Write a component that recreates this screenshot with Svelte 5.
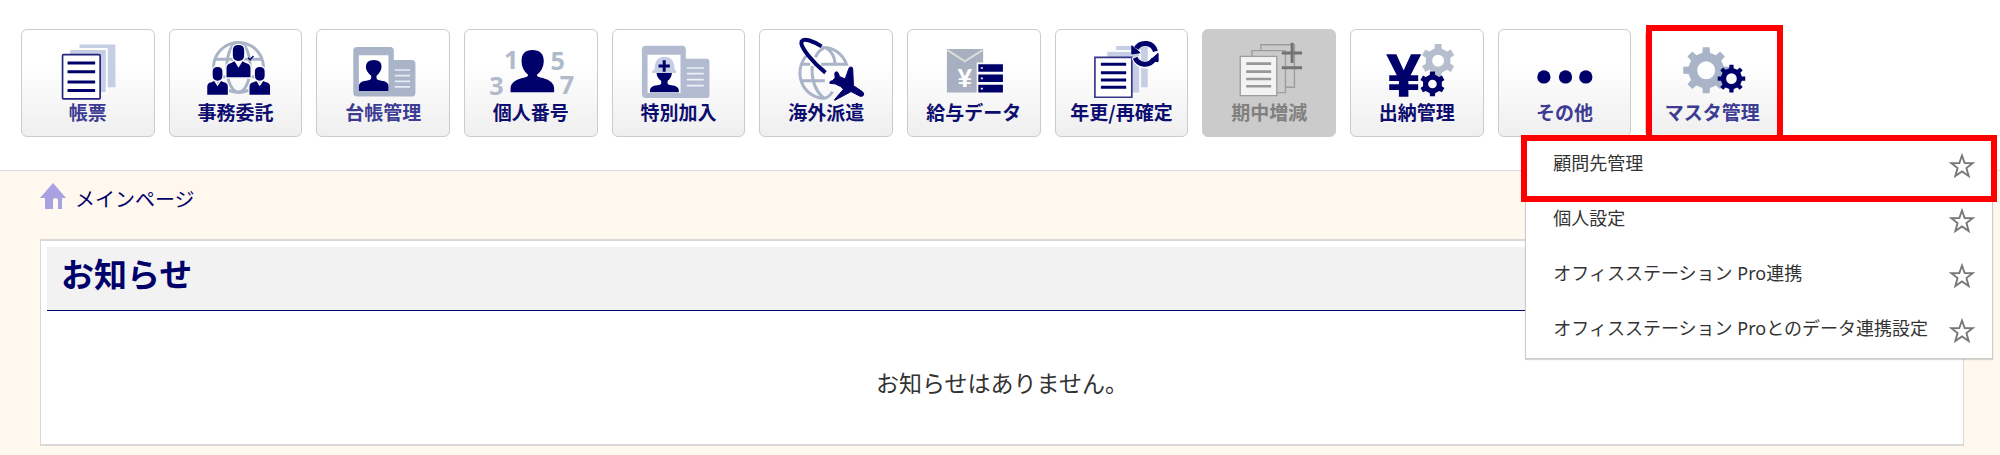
<script lang="ts">
  type Tool = {
    id: string;
    label: string;
    x: number; // left edge of the icon's viewBox
    soft?: boolean;
    disabled?: boolean;
    current?: boolean;
  };

  const tools: Tool[] = [
    { id: "forms", label: "帳票", x: 66, soft: true },
    { id: "entrust", label: "事務委託", x: 508 },
    { id: "ledger", label: "台帳管理", x: 52, soft: true },
    { id: "number", label: "個人番号", x: 494 },
    { id: "special", label: "特別加入", x: 39 },
    { id: "overseas", label: "海外派遣", x: 481 },
    { id: "salary", label: "給与データ", x: 55 },
    { id: "renewal", label: "年更/再確定", x: 497 },
    { id: "midterm", label: "期中増減", x: 41, disabled: true },
    { id: "cash", label: "出納管理", x: 483 },
    { id: "other", label: "その他", x: 57, soft: true },
    { id: "master", label: "マスタ管理", x: 499, soft: true, current: true },
  ];

  const menu = [
    "顧問先管理",
    "個人設定",
    "オフィスステーション Pro連携",
    "オフィスステーション Proとのデータ連携設定",
  ];

  const navy = "#00006b";
  const pale = "#a9b4c8";
  const sheet = "#c5cee3";

  let starred = $state<Record<string, boolean>>({});

  // Toothed ring with a round hole, filled with the evenodd rule.
  function gear(cx: number, cy: number, outer: number, inner: number, hole: number, teeth: number) {
    const step = (Math.PI * 2) / teeth;
    const pts: string[] = [];
    for (let i = 0; i < teeth; i++) {
      const a = i * step - Math.PI / 2;
      for (const [r, d] of [[inner, -0.27], [outer, -0.19], [outer, 0.19], [inner, 0.27]]) {
        const t = a + d * step;
        pts.push(`${(cx + r * Math.cos(t)).toFixed(1)} ${(cy + r * Math.sin(t)).toFixed(1)}`);
      }
    }
    return `M${pts.join("L")}Z M${cx - hole} ${cy}a${hole} ${hole} 0 1 0 ${hole * 2} 0a${hole} ${hole} 0 1 0 ${-hole * 2} 0Z`;
  }
</script>

{#snippet person(x: number, y: number, s: number)}
  <g transform="translate({x} {y}) scale({s})">
    <path
      d="M-36 49v-28q0-12 14-15l10-5 12 19 12-19 10 5q14 3 14 15v28z M-17-32q0-16 17-16t17 16v14q0 18-17 18t-17-18z"
      fill={navy}
      stroke="#fafafa"
      stroke-width="8"
      paint-order="stroke"
    />
  </g>
{/snippet}

{#snippet icon(id: string)}
  {#if id === "forms"}
    <path d="M239 103h108v129h-108z" fill={sheet} />
    <path d="M208 117h113v133h-113z" fill={sheet} stroke="#fff" stroke-width="6" />
    <rect x="188" y="134" width="113" height="133" rx="3" fill="#fff" stroke="#23237f" stroke-width="5" />
    <path d="M203 159h83M203 185h83M203 216h83M203 242h83" stroke={navy} stroke-width="9" />
  {:else if id === "entrust"}
    <g fill="none" stroke={pale} stroke-width="9">
      <circle cx="714" cy="172" r="75" />
      <ellipse cx="714" cy="172" rx="35" ry="75" />
      <path d="M644 148h140M644 200h140" />
    </g>
    <path d="M743 143l6 6 10-11" fill="none" stroke={navy} stroke-width="4" />
    {@render person(651, 212, 0.86)}
    {@render person(778, 212, 0.86)}
    {@render person(714, 153, 1)}
  {:else if id === "ledger"}
    <path
      d="M172 111h100q11 0 11 11v28h54q11 0 11 11v87q0 12-11 12H172q-11 0-11-12V122q0-11 11-11z"
      fill={pale}
    />
    <path d="M178 136h89v107h-89z" fill="#fff" />
    <path
      d="M178 243v-15q0-14 22-16 15-1 15-8v-7q-16-12-16-26 0-21 24-21t23 21q0 14-15 26v7q0 7 15 8 21 2 21 16v15z"
      fill={navy}
    />
    <path d="M286 180h46M286 197h46M286 214h46M286 231h46" stroke="#e6ebf4" stroke-width="5" />
  {:else if id === "number"}
    <g class="digits">
      <text x="611" y="178">1</text>
      <text x="751" y="181">5</text>
      <text x="567" y="254">3</text>
      <text x="779" y="251">7</text>
    </g>
    <path
      d="M631 247v-12q0-22 35-31 18-3 18-9-20-17-20-42 0-33 33-33t34 33q0 25-21 42 0 6 18 9 34 9 34 31v12z"
      fill={navy}
    />
  {:else if id === "special"}
    <path
      d="M138 107h109q11 0 11 11v28h64q7 0 7 8v103q0 7-7 7H138q-12 0-12-12V118q0-11 12-11z"
      fill="#b2bbd0"
    />
    <path d="M143 134h99v115h-99z" fill="#fff" />
    <path d="M157 184q3-5 7-6 0-38 30-38t30 38q4 1 5 6v5h-72z" fill={sheet} />
    <path d="M176 168h34M193 151v34" stroke={navy} stroke-width="9" />
    <path
      d="M170 189h46q0 14-13 24v7q0 5 12 6 22 2 22 16v5h-87v-5q0-14 22-16 12-1 12-6v-7q-14-10-14-24z"
      fill={navy}
    />
    <path d="M261 174h51M261 191h51M261 209h51M261 227h51" stroke="#eef1f7" stroke-width="5" />
  {:else if id === "overseas"}
    <g fill="none" stroke={pale} stroke-width="9">
      <path d="M620 138a73 76 0 0 0 53 127q16-2 26-20M664 113a73 78 0 0 1 77 50h-76" />
      <path d="M638 168q-4 62 34 96M673 114q-18 8-25 28M680 114q24 15 27 46M604 212h72M604 163h28" />
    </g>
    <path
      d="M678 188C640 158 600 110 606 94C613 82 642 94 666 109"
      fill="none"
      stroke={navy}
      stroke-width="12"
    />
    <path
      d="M755 171q-7 0-8 8l-10 28-16-7-7-14q-7-2-8 4l1 14-8 8q-10 1-8 8l17 2 16 8 8 8-25 29q-5 6 1 3l47-25 27 14q11 2 11-7 0-4-6-8l-25-17-2-48q0-8-5-8z"
      fill={navy}
      stroke={navy}
      stroke-width="3"
    />
  {:else if id === "salary"}
    <path d="M172 117h109v131H172z" fill="#a8afc0" />
    <path d="M174 120l52 34 53-34" fill="none" stroke="#dcdfd9" stroke-width="6" />
    <text class="yen" x="204" y="230" font-size="79" fill="#fff">¥</text>
    <g fill={navy} stroke="#fafafa" stroke-width="5">
      <path d="M264 160h79v28h-79zM264 191h79v28h-79zM264 222h79v28h-79z" />
    </g>
    <path d="M274 174h6M274 205h6M274 236h6" stroke="#fff" stroke-width="5" />
  {:else if id === "renewal"}
    <path d="M678 108h95v124h-95z" fill={sheet} />
    <path d="M649 123h101v128h-101z" fill={sheet} stroke="#fafafa" stroke-width="6" />
    <path d="M614 142h111v120h-111z" fill="#fff" stroke="#35358a" stroke-width="5" />
    <path d="M632 163h76M632 188h76M632 210h76M632 232h76" stroke={navy} stroke-width="9" />
    <g fill="none" stroke="#fafafa" stroke-width="22">
      <path d="M733 122a32 32 0 0 1 62 0M797 141a32 32 0 0 1-62 0" />
    </g>
    <g fill="none" stroke={navy} stroke-width="15">
      <path d="M738 115a32 32 0 0 1 58 9M792 147a32 32 0 0 1-57-4" />
    </g>
    <path d="M725 107v25l25-4zM804 130v25l-25-3z" fill={navy} stroke={navy} stroke-width="3" />
  {:else if id === "midterm"}
    <g fill="#cbcbcb" stroke="#9c9c9c" stroke-width="4">
      <path d="M215 104h101v128h-101z" />
      <path d="M188 122h101v126h-101z" />
      <path d="M153 139h110v118h-110z" fill="#f3f3f3" />
    </g>
    <path d="M171 161h75M171 185h75M171 207h75M171 229h75" stroke="#989898" stroke-width="8" />
    <path d="M278 129h61M309 98v61M278 173h61" stroke="#737373" stroke-width="9" />
  {:else if id === "cash"}
    <path d={gear(745, 152, 51, 38, 18, 6)} fill="#b6becd" fill-rule="evenodd" />
    <path d={gear(728, 222, 38, 29, 13, 6)} fill={navy} fill-rule="evenodd" />
    <text class="yen" x="592" y="257" font-size="178" fill={navy} stroke={navy} stroke-width="5">¥</text>
  {:else if id === "other"}
    <g fill={navy}>
      <circle cx="192" cy="201" r="20" />
      <circle cx="257" cy="201" r="20" />
      <circle cx="318" cy="201" r="20" />
    </g>
  {:else if id === "master"}
    <path d={gear(680, 181, 70, 54, 27, 8)} fill={pale} fill-rule="evenodd" />
    <path d={gear(756, 206, 42, 32, 16, 8)} fill={navy} fill-rule="evenodd" />
  {/if}
{/snippet}

<div class="page" lang="ja">
  <header>
    <nav>
      <ul class="tools">
        {#each tools as t (t.id)}
          <li class:current={t.current}>
            <button class="tool" class:soft={t.soft} type="button" disabled={t.disabled}>
              <svg viewBox="{t.x} 60 396 216" aria-hidden="true">{@render icon(t.id)}</svg>
              <span>{t.label}</span>
            </button>
            {#if t.current}
              <ul class="menu">
                {#each menu as item, i (item)}
                  <li class:marked={i === 0}>
                    <a href="#{i}">{item}</a>
                    <button
                      class="star"
                      type="button"
                      aria-label="お気に入り"
                      aria-pressed={!!starred[item]}
                      onclick={() => (starred[item] = !starred[item])}
                    >
                      <svg viewBox="0 0 24 24">
                        <path
                          d="M12 3l2.3 6.4 6.9.2-5.4 4.2 1.9 6.7-5.7-3.9-5.7 3.9 1.9-6.7-5.4-4.2 6.9-.2z"
                          fill={starred[item] ? "#777" : "none"}
                          stroke="#777"
                          stroke-width="1.6"
                        />
                      </svg>
                    </button>
                  </li>
                {/each}
              </ul>
            {/if}
          </li>
        {/each}
      </ul>
    </nav>
  </header>

  <main>
    <a class="home" href="#main">
      <svg viewBox="0 0 26 26" aria-hidden="true">
        <path d="M13 0l13 15h-4v11h-4v-9q0-2-2.500-2t-2.500 2v9H5V15H0z" fill="#a8a2e2" />
      </svg>
      <span>メインページ</span>
    </a>

    <section class="news">
      <h2>お知らせ</h2>
      <p>お知らせはありません。</p>
    </section>
  </main>
</div>

<style>
  :global(body) {
    margin: 0;
    background: #fff8ee;
  }
  .page {
    font-family: "Noto Sans", "Noto Sans CJK JP", sans-serif;
    color: #333;
  }
  ul {
    list-style: none;
    margin: 0;
    padding: 0;
  }
  header {
    background: #fff;
    border-bottom: 1px solid #d9d9dc;
    padding: 29px 21px 33px;
  }
  .tools {
    display: grid;
    grid-template-columns: repeat(12, 1fr);
    gap: 14px;
    max-width: 1758px;
  }
  .tools > li {
    position: relative;
  }
  .tool {
    display: flex;
    flex-direction: column;
    align-items: center;
    box-sizing: border-box;
    width: 100%;
    height: 108px;
    padding: 0;
    border: 1px solid #ccc;
    border-radius: 6px;
    background: linear-gradient(#fff 30%, #efefef);
    color: #0d0d70;
    font: bold 19px/20px "Noto Sans CJK JP", sans-serif;
    white-space: nowrap;
    cursor: pointer;
  }
  .tool svg {
    width: 132px;
    max-width: 100%;
    height: 72px;
    overflow: visible;
  }
  .tool.soft {
    color: #3c3c92;
  }
  .tool:disabled {
    background: #cbcbcb;
    color: #808080;
    cursor: default;
  }
  .digits {
    font: bold 76px "Open Sans", sans-serif;
    fill: #b0bacb;
  }
  .yen {
    font-family: "Liberation Sans", sans-serif;
    font-weight: bold;
  }
  .current::after,
  .marked::after {
    content: "";
    position: absolute;
    border: 6px solid #f00;
    pointer-events: none;
  }
  .current::after {
    inset: -4px -4px -4px 1px;
  }
  .menu {
    position: absolute;
    z-index: 1;
    top: 108px;
    left: -120px;
    border: 1px solid #ccc;
    background: #fff;
    box-shadow: 0 1px 1px rgba(0, 0, 0, 0.15);
  }
  .menu li {
    position: relative;
    display: flex;
    align-items: center;
    justify-content: space-between;
    gap: 20px;
    height: 55px;
    padding: 0 16px 0 27px;
  }
  .menu a {
    padding-bottom: 6px;
    color: #333;
    font-size: 18px;
    line-height: 26px;
    text-decoration: none;
    white-space: nowrap;
  }
  .marked::after {
    inset: -3px -5px -9px;
  }
  .star {
    display: flex;
    padding: 0;
    border: 0;
    background: none;
    cursor: pointer;
  }
  .star svg {
    width: 28px;
    height: 28px;
  }
  main {
    padding: 12px 36px 9px 40px;
  }
  .home {
    display: inline-flex;
    align-items: flex-end;
    gap: 9px;
    height: 26px;
    margin-bottom: 30px;
    color: #00006b;
    font-size: 20px;
    line-height: 18px;
    text-decoration: none;
    vertical-align: top;
  }
  .home svg {
    width: 26px;
    height: 26px;
  }
  .news {
    padding: 6px;
    border: solid #d9d9d9;
    border-width: 2px 1px;
    background: #fff;
  }
  .news h2 {
    margin: 0;
    padding: 8px 14px 15px;
    border-bottom: 1px solid #00006b;
    background: #f2f2f2;
    color: #00006b;
    font-size: 33px;
    line-height: 40px;
  }
  .news p {
    margin: 0;
    padding: 56px 0 39px;
    font-size: 23px;
    line-height: 32px;
    text-align: center;
  }
</style>
